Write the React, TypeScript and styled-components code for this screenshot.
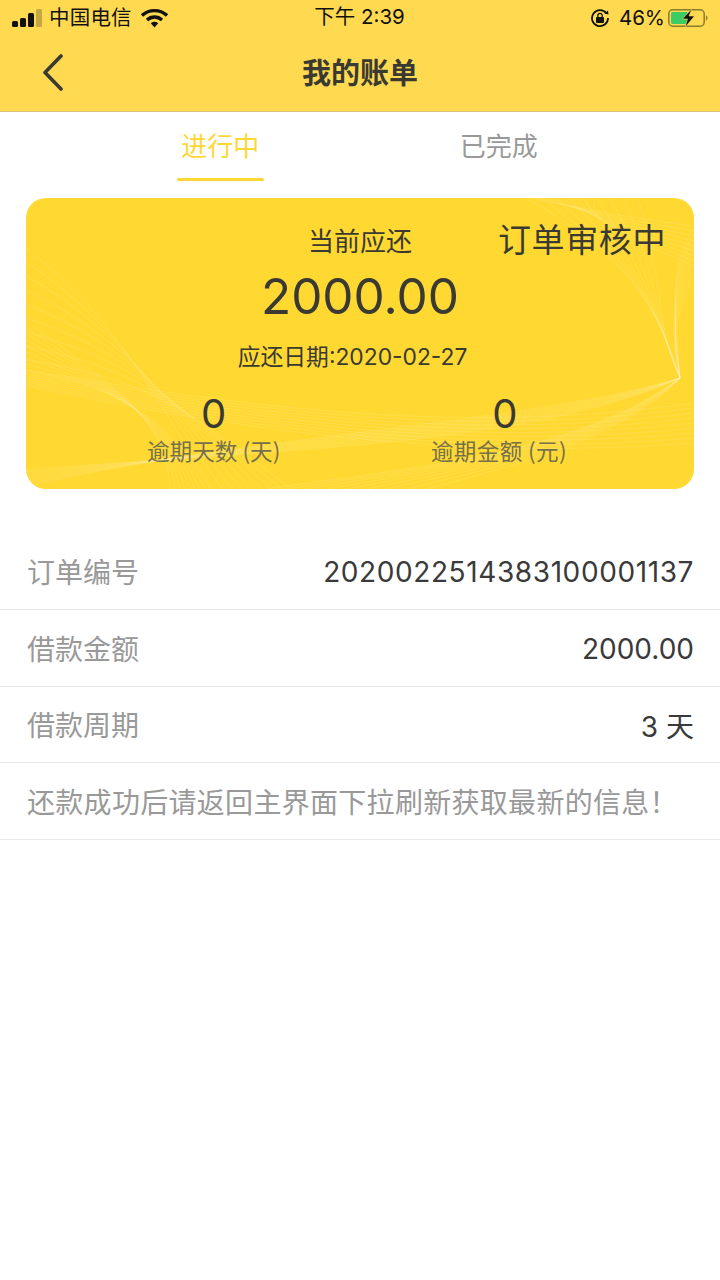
import React from "react";
import styled, { createGlobalStyle } from "styled-components";

const FONT = '"Noto Sans CJK SC", "Roboto", "Liberation Sans", sans-serif';
const DIGITS = '"Inter", "Noto Sans CJK SC", sans-serif';

const GlobalStyle = createGlobalStyle`
  html, body {
    margin: 0;
    padding: 0;
    background: #ffffff;
    font-family: ${FONT};
  }
  * { box-sizing: border-box; }
`;

const Page = styled.div`
  width: 720px;
  height: 1280px;
  background: #ffffff;
  overflow: hidden;
`;

const Header = styled.header`
  background: #ffda51;
  height: 112px;
  border-bottom: 1px solid #d9c67c;
`;

const StatusBar = styled.div`
  height: 36px;
  display: flex;
  align-items: center;
  justify-content: space-between;
  padding: 0 10px 0 12px;
  color: #111;
`;

const StatusGroup = styled.div<{ $end?: boolean }>`
  display: flex;
  align-items: center;
  width: 230px;
  justify-content: ${(p) => (p.$end ? "flex-end" : "flex-start")};
`;

const Carrier = styled.span`
  margin-left: 7px;
  margin-right: 9px;
  font-size: 20.500px;
  letter-spacing: 0.2px;
  line-height: 33px;
  height: 36px;
`;

const Clock = styled.span`
  font-family: ${DIGITS};
  font-size: 20.500px;
  line-height: 33px;
  height: 36px;
  margin-right: 3px;
`;

const Percent = styled.span`
  font-family: ${DIGITS};
  font-size: 20.500px;
  line-height: 36px;
  margin: 0 3px 0 9px;
`;

const NavBar = styled.div`
  height: 75px;
  display: flex;
  align-items: center;
  justify-content: center;
  position: relative;
`;

const BackIcon = styled.svg`
  position: absolute;
  left: 40px;
  top: 17px;
`;

const Title = styled.h1`
  margin: 0;
  font-size: 29px;
  font-weight: 700;
  color: #3a3a32;
  line-height: 71px;
  height: 75px;
`;

const Tabs = styled.nav`
  display: flex;
  height: 69px;
  padding-left: 81px;
  padding-right: 82px;
`;

const Tab = styled.div<{ $active?: boolean }>`
  flex: 1;
  display: flex;
  flex-direction: column;
  align-items: center;
  font-size: 26px;
  line-height: 65px;
  color: ${(p) => (p.$active ? "#fdd835" : "#999999")};
  position: relative;
  &::after {
    content: "";
    display: ${(p) => (p.$active ? "block" : "none")};
    position: absolute;
    bottom: 0;
    width: 87px;
    height: 3px;
    border-radius: 2px;
    background: #fdd835;
  }
`;

const Card = styled.section`
  position: relative;
  margin: 17px 26px 0;
  height: 291px;
  border-radius: 20px;
  background: #ffd932;
  overflow: hidden;
  display: flex;
  flex-direction: column;
  align-items: center;
  color: #3a3a32;
`;

const Waves = styled.svg`
  position: absolute;
  inset: 0;
`;

const CurrentLabel = styled.div`
  position: relative;
  font-size: 26px;
  line-height: 40px;
  height: 40px;
  margin-top: 22px;
`;

const Amount = styled.div`
  position: relative;
  font-family: ${DIGITS};
  font-size: 49.500px;
  line-height: 68px;
  height: 68px;
  margin-top: 2px;
`;

const DueDate = styled.div`
  position: relative;
  font-family: ${DIGITS};
  font-size: 22.800px;
  line-height: 34px;
  height: 34px;
  margin: 10px 15px 0 0;
`;

const Status = styled.div`
  position: absolute;
  right: 28px;
  top: 18px;
  font-size: 33px;
  line-height: 44px;
  letter-spacing: 0.6px;
`;

const Stats = styled.div`
  position: relative;
  width: 100%;
  margin-top: 19px;
  display: flex;
  padding: 0 127px 0 121px;
  justify-content: space-between;
`;

const Stat = styled.div`
  display: flex;
  flex-direction: column;
  align-items: center;
  white-space: nowrap;
`;

const StatValue = styled.div<{ $shift?: boolean }>`
  font-family: ${DIGITS};
  font-size: 40px;
  line-height: 41px;
  height: 41px;
  padding-left: ${(p) => (p.$shift ? "12px" : "0")};
`;

const StatLabel = styled.div<{ $wide?: boolean }>`
  font-size: 22.600px;
  line-height: 34px;
  color: #77714a;
  letter-spacing: ${(p) => (p.$wide ? "0.35px" : "0")};
`;

const List = styled.div`
  margin-top: 44.500px;
`;

const Row = styled.div`
  height: 76.500px;
  display: flex;
  align-items: center;
  justify-content: space-between;
  padding: 0 26px 0 27px;
  border-bottom: 1px solid #e8e8e8;
  font-size: 28px;
  color: #999999;
`;

const RowValue = styled.span`
  color: #3a3a3a;
  font-family: ${DIGITS};
  font-size: 28px;
  margin-top: 2px;
`;

const OrderNumber = styled(RowValue)`
  letter-spacing: 0.6px;
`;

const Notice = styled.span`
  letter-spacing: 0.3px;
`;

const STRANDS = Array.from({ length: 9 }, (_, i) => i);

export default function App() {
  return (
    <Page>
      <GlobalStyle />
      <Header>
        <StatusBar>
          <StatusGroup>
            <svg width="30" height="20" viewBox="0 0 30 20">
              <rect x="0" y="13" width="6" height="6" rx="1.500" fill="#111" />
              <rect x="8" y="10" width="6" height="9" rx="1.500" fill="#111" />
              <rect x="16" y="5" width="6" height="14" rx="1.500" fill="#111" />
              <rect x="24" y="1" width="6" height="18" rx="1.500" fill="#111" opacity="0.25" />
            </svg>
            <Carrier>中国电信</Carrier>
            <svg width="27" height="20" viewBox="0 0 27 20">
              <path d="M1 7.500C8 1 19 1 26 7.500" fill="none" stroke="#111" strokeWidth="3.400" />
              <path d="M6 12c4.500-4 10.500-4 15 0" fill="none" stroke="#111" strokeWidth="3.400" />
              <path d="M9.800 15.200c2.200-1.800 5.200-1.800 7.400 0L13.500 19.500z" fill="#111" />
            </svg>
          </StatusGroup>
          <Clock>下午 2:39</Clock>
          <StatusGroup $end>
            <svg width="20" height="20" viewBox="0 0 20 20">
              <path d="M16.500 5.500A8 8 0 1 0 18 10" fill="none" stroke="#111" strokeWidth="1.800" />
              <path d="M14.500 5.500l4 1-.5-4z" fill="#111" />
              <rect x="6" y="9" width="8" height="6" rx="1" fill="#111" />
              <path d="M7.800 9V7.500a2.200 2.200 0 0 1 4.400 0V9" fill="none" stroke="#111" strokeWidth="1.300" />
            </svg>
            <Percent>46%</Percent>
            <svg width="42" height="20" viewBox="0 0 42 20">
              <rect x="0.800" y="1.800" width="35.400" height="16.400" rx="4" fill="none" stroke="#8a7a2e" strokeWidth="1.500" />
              <rect x="3" y="4" width="17" height="12" rx="1.500" fill="#3dcc64" />
              <path d="M38 7.500c2 .5 2 4.500 0 5z" fill="#8a7a2e" />
              <path d="M24 0.500L14.500 11h5l-2.500 8.500L26.500 8h-5.500z" fill="#111" stroke="#ffda51" strokeWidth="0.600" />
            </svg>
          </StatusGroup>
        </StatusBar>
        <NavBar>
          <BackIcon width="24" height="38" viewBox="0 0 24 38">
            <path d="M21 3L5 19.500 21 36" fill="none" stroke="#3a3a32" strokeWidth="3.600" strokeLinecap="round" strokeLinejoin="round" />
          </BackIcon>
          <Title>我的账单</Title>
        </NavBar>
      </Header>

      <Tabs>
        <Tab $active>进行中</Tab>
        <Tab>已完成</Tab>
      </Tabs>

      <Card>
        <Waves width="668" height="291" viewBox="0 0 668 291">
          <g fill="none" stroke="#fff" strokeOpacity="0.12" strokeWidth="1">
            {STRANDS.map((i) => (
              <path key={`a${i}`} d={`M0 ${50 + i * 14}C${90 + i * 6} ${120 + i * 8} ${130 + i * 4} ${200 + i * 2} ${186 + i * 10} 291`} />
            ))}
            {STRANDS.map((i) => (
              <path key={`b${i}`} d={`M0 ${172 - i * 6}C${80 + i * 4} ${186 + i * 2} 140 ${215 + i * 2} ${184 - i * 5} 291`} />
            ))}
            {STRANDS.map((i) => (
              <path key={`c${i}`} d={`M0 ${272 + i * 2}C230 ${252 - i * 2} 500 ${250 - i * 3} 654 180`} />
            ))}
            {STRANDS.map((i) => (
              <path key={`d${i}`} d={`M${500 + i * 14} 0C${590 + i * 6} ${50 + i * 4} 630 ${100 + i * 4} 654 180`} />
            ))}
            {STRANDS.map((i) => (
              <path key={`e${i}`} d={`M668 ${30 + i * 6}C640 ${70 + i * 8} 650 ${130 + i * 4} 654 180`} />
            ))}
            {STRANDS.map((i) => (
              <path key={`f${i}`} d={`M654 180C${600 - i * 6} ${240 + i * 2} ${480 - i * 12} 270 ${400 - i * 20} 291`} />
            ))}
            {STRANDS.map((i) => (
              <path key={`g${i}`} d={`M0 ${172 + i * 2}C200 ${205 + i * 3} 420 ${240 + i * 3} 668 ${205 + i * 5}`} />
            ))}
            {STRANDS.map((i) => (
              <path key={`h${i}`} d={`M${505 + i * 8} 0C560 ${12 + i * 2} 620 ${22 + i * 3} 668 ${28 + i * 5}`} />
            ))}
          </g>
        </Waves>
        <CurrentLabel>当前应还</CurrentLabel>
        <Amount>2000.00</Amount>
        <DueDate>应还日期:2020-02-27</DueDate>
        <Stats>
          <Stat>
            <StatValue>0</StatValue>
            <StatLabel>逾期天数 (天)</StatLabel>
          </Stat>
          <Stat>
            <StatValue $shift>0</StatValue>
            <StatLabel $wide>逾期金额 (元)</StatLabel>
          </Stat>
        </Stats>
        <Status>订单审核中</Status>
      </Card>

      <List>
        <Row>
          订单编号
          <OrderNumber>2020022514383100001137</OrderNumber>
        </Row>
        <Row>
          借款金额
          <RowValue>2000.00</RowValue>
        </Row>
        <Row>
          借款周期
          <RowValue>3 天</RowValue>
        </Row>
        <Row>
          <Notice>还款成功后请返回主界面下拉刷新获取最新的信息！</Notice>
        </Row>
      </List>
    </Page>
  );
}
